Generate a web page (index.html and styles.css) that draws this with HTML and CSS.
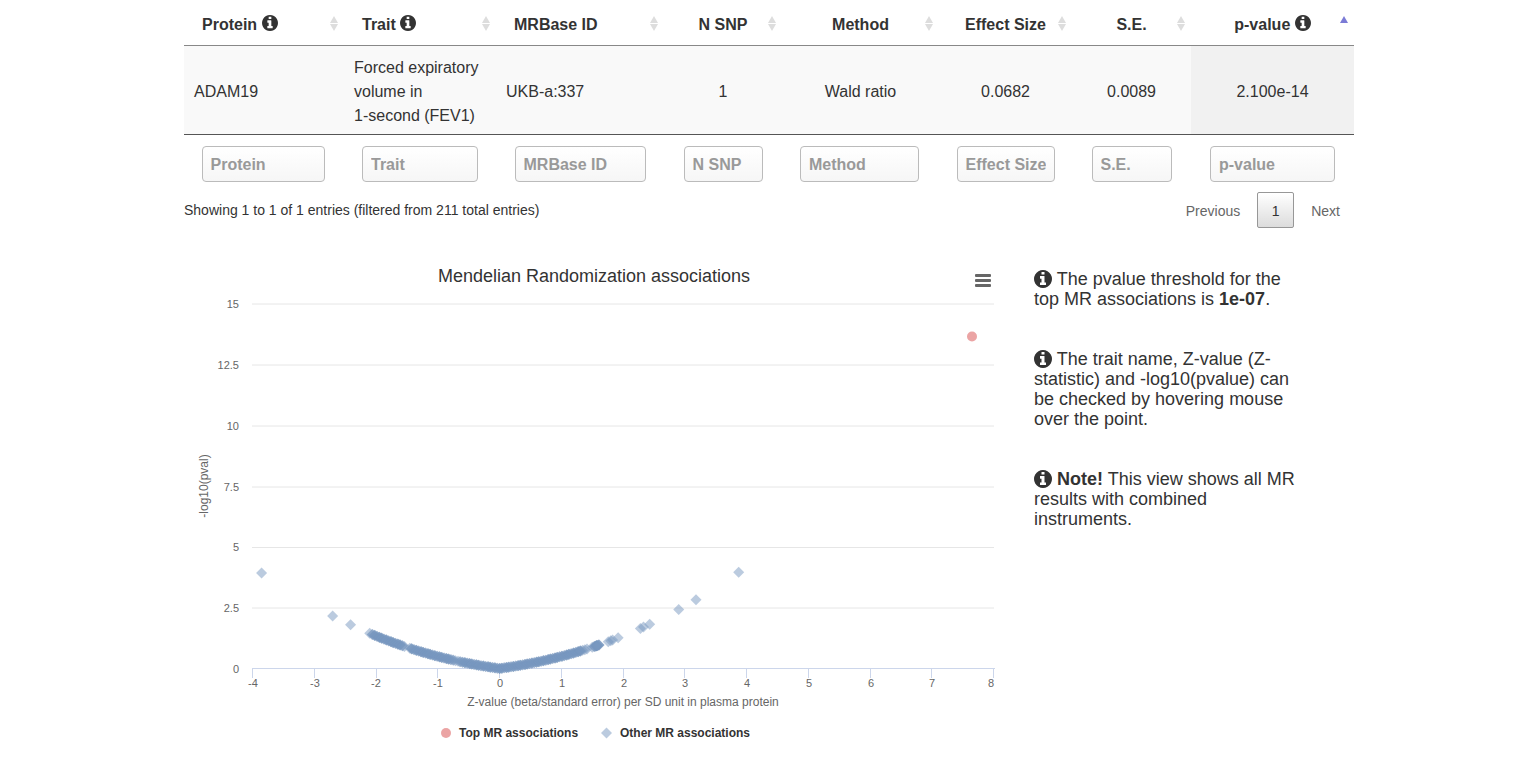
FILE: index.html
```html
<!DOCTYPE html>
<html lang="en">
<head>
    <meta charset="UTF-8">
    <title>MR results</title>
    <link rel="stylesheet" href="styles.css">
</head>
<body>
    <svg class="defs" width="0" height="0" aria-hidden="true">
        <symbol id="info" viewBox="0 128 1536 1536">
            <path d="M1024 1376v-160q0-14-9-23t-23-9h-96v-512q0-14-9-23t-23-9h-320q-14 0-23 9t-9 23v160q0 14 9 23t23 9h96v320h-96q-14 0-23 9t-9 23v160q0 14 9 23t23 9h448q14 0 23-9t9-23zm-128-896v-160q0-14-9-23t-23-9h-192q-14 0-23 9t-9 23v160q0 14 9 23t23 9h192q14 0 23-9t9-23zm640 416q0 209-103 385.5t-279.5 279.5-385.5 103-385.5-103-279.5-279.5-103-385.5 103-385.5 279.5-279.5 385.5-103 385.5 103 279.5 279.5 103 385.5z"/>
        </symbol>
    </svg>
    <main class="page">
        <table class="results">
            <colgroup>
                <col class="c-protein"><col class="c-trait"><col class="c-id"><col class="c-snp">
                <col class="c-method"><col class="c-effect"><col class="c-se"><col class="c-p">
            </colgroup>
            <thead>
                <tr>
                    <th class="left sortable">Protein <svg class="info"><use href="#info"/></svg></th>
                    <th class="left sortable">Trait <svg class="info"><use href="#info"/></svg></th>
                    <th class="left sortable">MRBase ID</th>
                    <th class="sortable">N SNP</th>
                    <th class="sortable">Method</th>
                    <th class="sortable">Effect Size</th>
                    <th class="sortable">S.E.</th>
                    <th class="sorted">p-value <svg class="info"><use href="#info"/></svg></th>
                </tr>
            </thead>
            <tbody>
                <tr>
                    <td class="left">ADAM19</td>
                    <td class="left">Forced expiratory volume in <span class="nowrap">1-second (FEV1)</span></td>
                    <td class="left">UKB-a:337</td>
                    <td>1</td>
                    <td>Wald ratio</td>
                    <td>0.0682</td>
                    <td>0.0089</td>
                    <td class="sorted-cell">2.100e-14</td>
                </tr>
            </tbody>
            <tfoot>
                <tr>
                    <td><input class="filter f-protein" placeholder="Protein"></td>
                    <td><input class="filter f-trait" placeholder="Trait"></td>
                    <td><input class="filter f-id" placeholder="MRBase ID"></td>
                    <td><input class="filter f-snp" placeholder="N SNP"></td>
                    <td><input class="filter f-method" placeholder="Method"></td>
                    <td><input class="filter f-effect" placeholder="Effect Size"></td>
                    <td><input class="filter f-se" placeholder="S.E."></td>
                    <td><input class="filter f-p" placeholder="p-value"></td>
                </tr>
            </tfoot>
        </table>

        <div class="table-bottom">
            <div class="entries">Showing 1 to 1 of 1 entries (filtered from 211 total entries)</div>
            <div class="pager">
                <a class="pager-link">Previous</a>
                <a class="pager-current">1</a>
                <a class="pager-link">Next</a>
            </div>
        </div>

        <section class="lower">
            <svg id="chart" class="chart" viewBox="184 250 830 510" width="830" height="510">
                <g class="grid">
                    <line x1="252" x2="994" y1="304" y2="304"/>
                    <line x1="252" x2="994" y1="365" y2="365"/>
                    <line x1="252" x2="994" y1="426" y2="426"/>
                    <line x1="252" x2="994" y1="487" y2="487"/>
                    <line x1="252" x2="994" y1="547.5" y2="547.5"/>
                    <line x1="252" x2="994" y1="608" y2="608"/>
                </g>
                <g class="axis">
                    <line x1="252" x2="995" y1="668.5" y2="668.5"/>
                    <line x1="252.5" x2="252.5" y1="668" y2="678"/>
                    <line x1="314.5" x2="314.5" y1="668" y2="678"/>
                    <line x1="376.5" x2="376.5" y1="668" y2="678"/>
                    <line x1="437.5" x2="437.5" y1="668" y2="678"/>
                    <line x1="499.5" x2="499.5" y1="668" y2="678"/>
                    <line x1="561.5" x2="561.5" y1="668" y2="678"/>
                    <line x1="623.5" x2="623.5" y1="668" y2="678"/>
                    <line x1="684.5" x2="684.5" y1="668" y2="678"/>
                    <line x1="746.5" x2="746.5" y1="668" y2="678"/>
                    <line x1="808.5" x2="808.5" y1="668" y2="678"/>
                    <line x1="870.5" x2="870.5" y1="668" y2="678"/>
                    <line x1="931.5" x2="931.5" y1="668" y2="678"/>
                    <line x1="993.5" x2="993.5" y1="668" y2="678"/>
                </g>
                <g class="tick y-tick">
                    <text x="239" y="308">15</text>
                    <text x="239" y="369">12.5</text>
                    <text x="239" y="430">10</text>
                    <text x="239" y="491">7.5</text>
                    <text x="239" y="551">5</text>
                    <text x="239" y="612">2.5</text>
                    <text x="239" y="673">0</text>
                </g>
                <g class="tick x-tick">
                    <text x="253" y="687">-4</text>
                    <text x="315" y="687">-3</text>
                    <text x="376" y="687">-2</text>
                    <text x="438" y="687">-1</text>
                    <text x="500" y="687">0</text>
                    <text x="562" y="687">1</text>
                    <text x="624" y="687">2</text>
                    <text x="685" y="687">3</text>
                    <text x="747" y="687">4</text>
                    <text x="809" y="687">5</text>
                    <text x="871" y="687">6</text>
                    <text x="932" y="687">7</text>
                    <text x="991" y="687">8</text>
                </g>
                <text class="chart-title" x="594" y="282">Mendelian Randomization associations</text>
                <g class="menu">
                    <rect x="975" y="274" width="16" height="3" rx="1"/>
                    <rect x="975" y="279" width="16" height="3" rx="1"/>
                    <rect x="975" y="284" width="16" height="3" rx="1"/>
                </g>
                <text class="axis-title" x="623" y="706">Z-value (beta/standard error) per SD unit in plasma protein</text>
                <text class="axis-title" transform="translate(208 486) rotate(-90)">-log10(pval)</text>
                <g id="others" class="others"></g>
                <circle class="top-point" cx="972" cy="336.5" r="5"/>
                <circle class="top-point" cx="446" cy="733" r="5"/>
                <text class="legend-label" x="459" y="737">Top MR associations</text>
                <path class="other-point" d="M606.5 727.5l5.5 5.5-5.5 5.5-5.5-5.5z"/>
                <text class="legend-label" x="620" y="737">Other MR associations</text>
            </svg>

            <div class="notes">
                <p><svg class="info"><use href="#info"/></svg> The pvalue threshold for the top MR associations is <b>1e-07</b>.</p>
                <p><svg class="info"><use href="#info"/></svg> The trait name, Z-value (Z-statistic) and -log10(pvalue) can be checked by hovering mouse over the point.</p>
                <p><svg class="info"><use href="#info"/></svg> <b>Note!</b> This view shows all MR results with combined instruments.</p>
            </div>
        </section>
    </main>
    <script src="chart.js"></script>
</body>
</html>
```

FILE: styles.css
```css
* {
    box-sizing: border-box;
}

body {
    margin: 0;
    font-family: "Liberation Sans", Arial, sans-serif;
    font-size: 14px;
    color: #333;
    background: #fff;
}

.defs {
    display: block;
    height: 0;
}

.page {
    width: 1170px;
    margin-left: 184px;
}

.nowrap {
    white-space: nowrap;
}

.info {
    width: 16px;
    height: 16px;
    fill: #333;
    vertical-align: -1px;
}

/* table */
.results {
    width: 1170px;
    border-collapse: collapse;
    table-layout: fixed;
    font-size: 16px;
}

.c-protein { width: 160px; }
.c-trait { width: 152px; }
.c-id { width: 168px; }
.c-snp { width: 118px; }
.c-method { width: 157px; }
.c-effect { width: 133px; }
.c-se { width: 119px; }
.c-p { width: 163px; }

.results th {
    position: relative;
    height: 45px;
    padding: 5px 18px 0;
    font-weight: bold;
    text-align: center;
    border-bottom: 1px solid #888;
}

.results th.left {
    text-align: left;
}

/* sort arrows */
.sortable::before,
.sortable::after,
.sorted::before {
    content: "";
    position: absolute;
    right: 6px;
    border-left: 4px solid transparent;
    border-right: 4px solid transparent;
}

.sortable::before {
    top: 16px;
    border-bottom: 7px solid #ddd;
}

.sortable::after {
    top: 24px;
    border-top: 7px solid #ddd;
}

.sorted::before {
    top: 16px;
    border-bottom: 7px solid #7b7bd6;
}

.results tbody td {
    height: 89px;
    padding: 4px 10px 0;
    line-height: 24px;
    text-align: center;
    background: #f9f9f9;
    border-bottom: 1px solid #555;
}

.results tbody td.left {
    text-align: left;
}

.results tbody td.sorted-cell {
    background: #f1f1f1;
}

.results tfoot td {
    height: 58px;
    padding: 2px 0 0;
    text-align: center;
}

.filter {
    height: 36px;
    padding: 2px 8px 0;
    border: 1px solid #bbb;
    border-radius: 4px;
    background: linear-gradient(#fff, #f6f6f6);
    font-family: inherit;
    font-size: 16px;
    font-weight: bold;
    vertical-align: middle;
}

.filter::placeholder {
    color: #999;
    opacity: 1;
}

.f-protein { width: 123px; margin-right: 2px; }
.f-trait { width: 116px; }
.f-id { width: 131px; }
.f-snp { width: 79px; }
.f-method { width: 119px; margin-right: 2px; }
.f-effect { width: 98px; }
.f-se { width: 80px; }
.f-p { width: 125px; }

.table-bottom {
    display: flex;
    justify-content: space-between;
    align-items: center;
    height: 36px;
}

.pager {
    display: flex;
    align-items: center;
    gap: 17px;
    padding-right: 14px;
}

.pager-link {
    padding-top: 1px;
    color: #666;
}

.pager-current {
    width: 37px;
    height: 36px;
    line-height: 36px;
    text-align: center;
    border: 1px solid #979797;
    border-radius: 2px;
    background: linear-gradient(#fff, #dcdcdc);
}

/* chart and side notes */
.lower {
    display: flex;
    margin-top: 22px;
}

.chart {
    flex: none;
    display: block;
}

.grid line {
    stroke: #e6e6e6;
    stroke-width: 1;
}

.axis line {
    stroke: #ccd6eb;
    stroke-width: 1;
}

.tick text {
    font-size: 11px;
    fill: #666;
}

.y-tick text {
    text-anchor: end;
}

.x-tick text {
    text-anchor: middle;
}

.chart-title {
    font-size: 18px;
    fill: #333;
    text-anchor: middle;
}

.axis-title {
    font-size: 12px;
    fill: #666;
    text-anchor: middle;
}

.legend-label {
    font-size: 12px;
    font-weight: bold;
    fill: #333;
}

.menu rect {
    fill: #666;
}

.top-point {
    fill: #e27d7d;
    opacity: 0.7;
}

.other-point {
    fill: #7798bf;
    opacity: 0.5;
}

.notes {
    width: 270px;
    margin-left: 20px;
    padding-top: 19px;
    font-size: 18px;
    line-height: 20px;
}

.notes p {
    margin: 0 0 40px;
}

.notes .info {
    width: 18px;
    height: 18px;
    vertical-align: -3px;
}
```

FILE: chart.js
```js
// draws the "other" series: p is two sided, so the points sit on a V shaped curve
var svgNS = "http://www.w3.org/2000/svg";
var others = document.getElementById("others");

function erfc(x) {
    var t = 1 / (1 + 0.5 * x);
    return t * Math.exp(-x * x - 1.26551223 + t * (1.00002368 + t * (0.37409196 + t * (0.09678418 +
        t * (-0.18628806 + t * (0.27886807 + t * (-1.13520398 + t * (1.48851587 +
        t * (-0.82215223 + t * 0.17087277)))))))));
}

function addPoint(z) {
    var y = -Math.log10(erfc(Math.abs(z) / Math.SQRT2));
    var px = 499.5 + z * 61.8;
    var py = 668.5 - y * 24.3;
    var d = document.createElementNS(svgNS, "path");
    d.setAttribute("class", "other-point");
    d.setAttribute("d", "M" + px + " " + (py - 5.5) + "l5.5 5.5-5.5 5.5-5.5-5.5z");
    others.appendChild(d);
}

var single = [-3.85, -2.7, -2.41, 1.76, 1.8, 1.83, 1.92, 2.28, 2.33, 2.43, 2.9, 3.18, 3.87];
single.forEach(addPoint);

// dense part of the curve, with a few thin stretches
var i, z;
for (i = 0; i < 260; i++) {
    z = -2.1 + 3.7 * i / 259 + ((i * 0.618) % 1) * 0.05;
    if ((z > -1.56 && z < -1.45 && i % 3) || (z > -0.75 && z < -0.62 && i % 2) || (z > 1.32 && z < 1.5 && i % 3)) {
        continue;
    }
    addPoint(z);
}
for (i = 0; i < 5; i++) {
    addPoint(1.55 + i * 0.01);
}
```
